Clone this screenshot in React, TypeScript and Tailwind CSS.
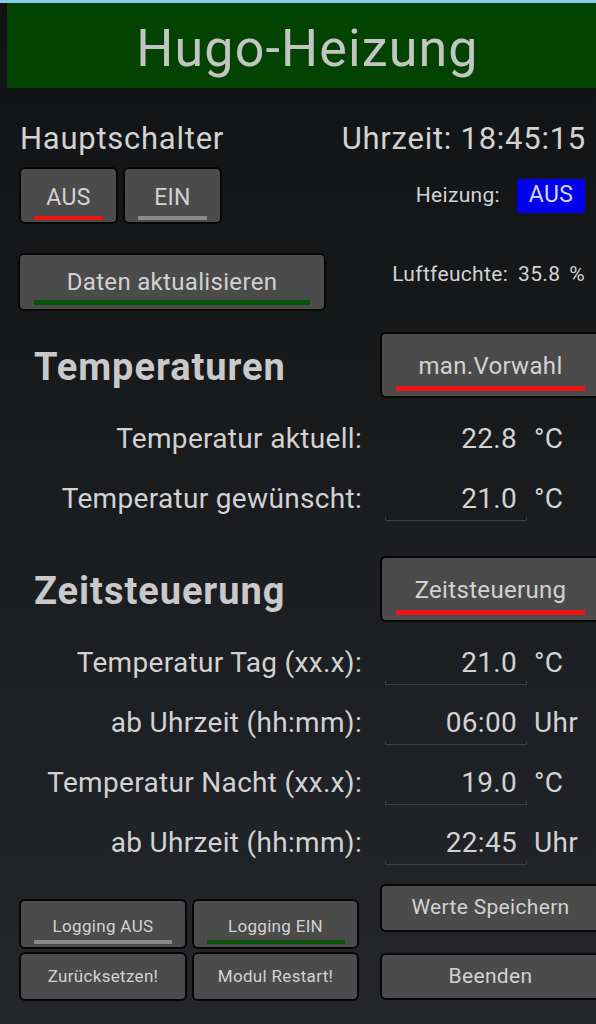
import type { ReactNode } from "react";

function Btn({ className, children }: { className: string; children: ReactNode }) {
  return (
    <div className={`flex shrink-0 flex-col items-center rounded-[6px] border-2 border-[#060606] bg-[#4b4b4b] text-[#d2d2d2] ${className}`}>
      {children}
    </div>
  );
}

function Row({ label, value, unit, line }: { label: string; value: string; unit: string; line?: boolean }) {
  return (
    <div className="flex h-[60px] items-center text-[28px] leading-none">
      <div className="w-[362px] shrink-0 text-right">{label}</div>
      <div className="ml-[23px] flex h-[44px] w-[142px] shrink-0 flex-col">
        <div className="flex flex-1 items-center justify-end pt-[3px] pr-[10px]">{value}</div>
        <div className={line ? "h-[4px] border-x border-b border-[#3b3e42]" : "h-[4px]"} />
      </div>
      <div className="ml-[7px]">{unit}</div>
    </div>
  );
}

function Heading({ title, button }: { title: string; button: string }) {
  return (
    <div className="flex items-center">
      <div className="w-[380px] shrink-0 pt-[4px] pl-[34px] text-[38px] font-bold leading-none tracking-[0.025em] text-[#c9c9c9]">{title}</div>
      <Btn className="h-[66px] w-[221px] justify-end pb-[5px]">
        <span className="text-[24px] leading-[26px]">{button}</span>
        <div className="mt-[7px] h-[5px] w-[189px] bg-[#ec1515]" />
      </Btn>
    </div>
  );
}

export default function App() {
  return (
    <div className="h-[1024px] w-[596px] overflow-hidden bg-linear-to-b from-[#111213] to-[#24262a] font-[Roboto,sans-serif] tracking-[0.02em] text-[#d2d2d2]">
      <div className="h-[3px] bg-[#86cbe9]" />
      <div className="ml-[7px] flex h-[85px] items-center justify-center bg-[#024302] pt-[7px] pl-[12px]">
        <h1 className="text-[52px] leading-none tracking-[0.022em] text-[#c2c6c2]">Hugo-Heizung</h1>
      </div>

      <div className="mt-[32px] flex h-[36px] items-center justify-between pr-[10px] pl-[20px] text-[31px] leading-none tracking-[0.024em]">
        <span>Hauptschalter</span>
        <span>Uhrzeit: 18:45:15</span>
      </div>

      <div className="mt-[11px] flex items-center justify-between pr-[11px] pl-[19px]">
        <div className="flex gap-[5px]">
          <Btn className="h-[57px] w-[99px] justify-end pb-[2px]">
            <span className="text-[23px] leading-[24px]">AUS</span>
            <div className="mt-[6px] h-[4px] w-[69px] bg-[#ec1515]" />
          </Btn>
          <Btn className="h-[57px] w-[99px] justify-end pb-[2px]">
            <span className="text-[23px] leading-[24px]">EIN</span>
            <div className="mt-[6px] h-[4px] w-[69px] bg-[#8b8b8b]" />
          </Btn>
        </div>
        <div className="flex items-center gap-[17px]">
          <span className="text-[21px]">Heizung:</span>
          <span className="flex h-[34px] w-[68px] items-center justify-center bg-[#0000ee] text-[23px] text-[#d6d6ea]">AUS</span>
        </div>
      </div>

      <div className="mt-[29px] flex items-start justify-between pr-[11px] pl-[18px]">
        <Btn className="h-[58px] w-[308px] justify-end pb-[4px]">
          <span className="text-[24px] leading-[26px]">Daten aktualisieren</span>
          <div className="mt-[5px] h-[5px] w-[276px] bg-[#075407]" />
        </Btn>
        <div className="mt-[9px] text-[21px] leading-[24px]">
          Luftfeuchte:<span className="ml-[10px]">35.8</span>
          <span className="ml-[9px]">%</span>
        </div>
      </div>

      <div className="mt-[21px]">
        <Heading title="Temperaturen" button="man.Vorwahl" />
      </div>
      <div className="mt-[11px]">
        <Row label="Temperatur aktuell:" value="22.8" unit="°C" />
        <Row label="Temperatur gewünscht:" value="21.0" unit="°C" line />
      </div>

      <div className="mt-[27px]">
        <Heading title="Zeitsteuerung" button="Zeitsteuerung" />
      </div>
      <div className="mt-[11px]">
        <Row label="Temperatur Tag (xx.x):" value="21.0" unit="°C" line />
        <Row label="ab Uhrzeit (hh:mm):" value="06:00" unit="Uhr" line />
        <Row label="Temperatur Nacht (xx.x):" value="19.0" unit="°C" line />
        <Row label="ab Uhrzeit (hh:mm):" value="22:45" unit="Uhr" line />
      </div>

      <div className="mt-[11px] flex items-start">
        <div className="mt-[15px] ml-[19px] grid shrink-0 grid-cols-[168px_167px] gap-x-[5px] gap-y-[3px]">
          <Btn className="h-[50px] justify-end pb-[3px]">
            <span className="text-[17px] leading-[22px]">Logging AUS</span>
            <div className="mt-[3px] h-[4px] w-[138px] bg-[#8b8b8b]" />
          </Btn>
          <Btn className="h-[50px] justify-end pb-[3px]">
            <span className="text-[17px] leading-[22px]">Logging EIN</span>
            <div className="mt-[3px] h-[4px] w-[138px] bg-[#075407]" />
          </Btn>
          <Btn className="h-[49px] justify-center text-[17px]">Zurücksetzen!</Btn>
          <Btn className="h-[49px] justify-center text-[17px]">Modul Restart!</Btn>
        </div>
        <div className="ml-[21px] flex w-[221px] shrink-0 flex-col gap-[21px]">
          <Btn className="h-[48px] justify-center text-[21px]">Werte Speichern</Btn>
          <Btn className="h-[47px] justify-center text-[21px]">Beenden</Btn>
        </div>
      </div>
    </div>
  );
}
